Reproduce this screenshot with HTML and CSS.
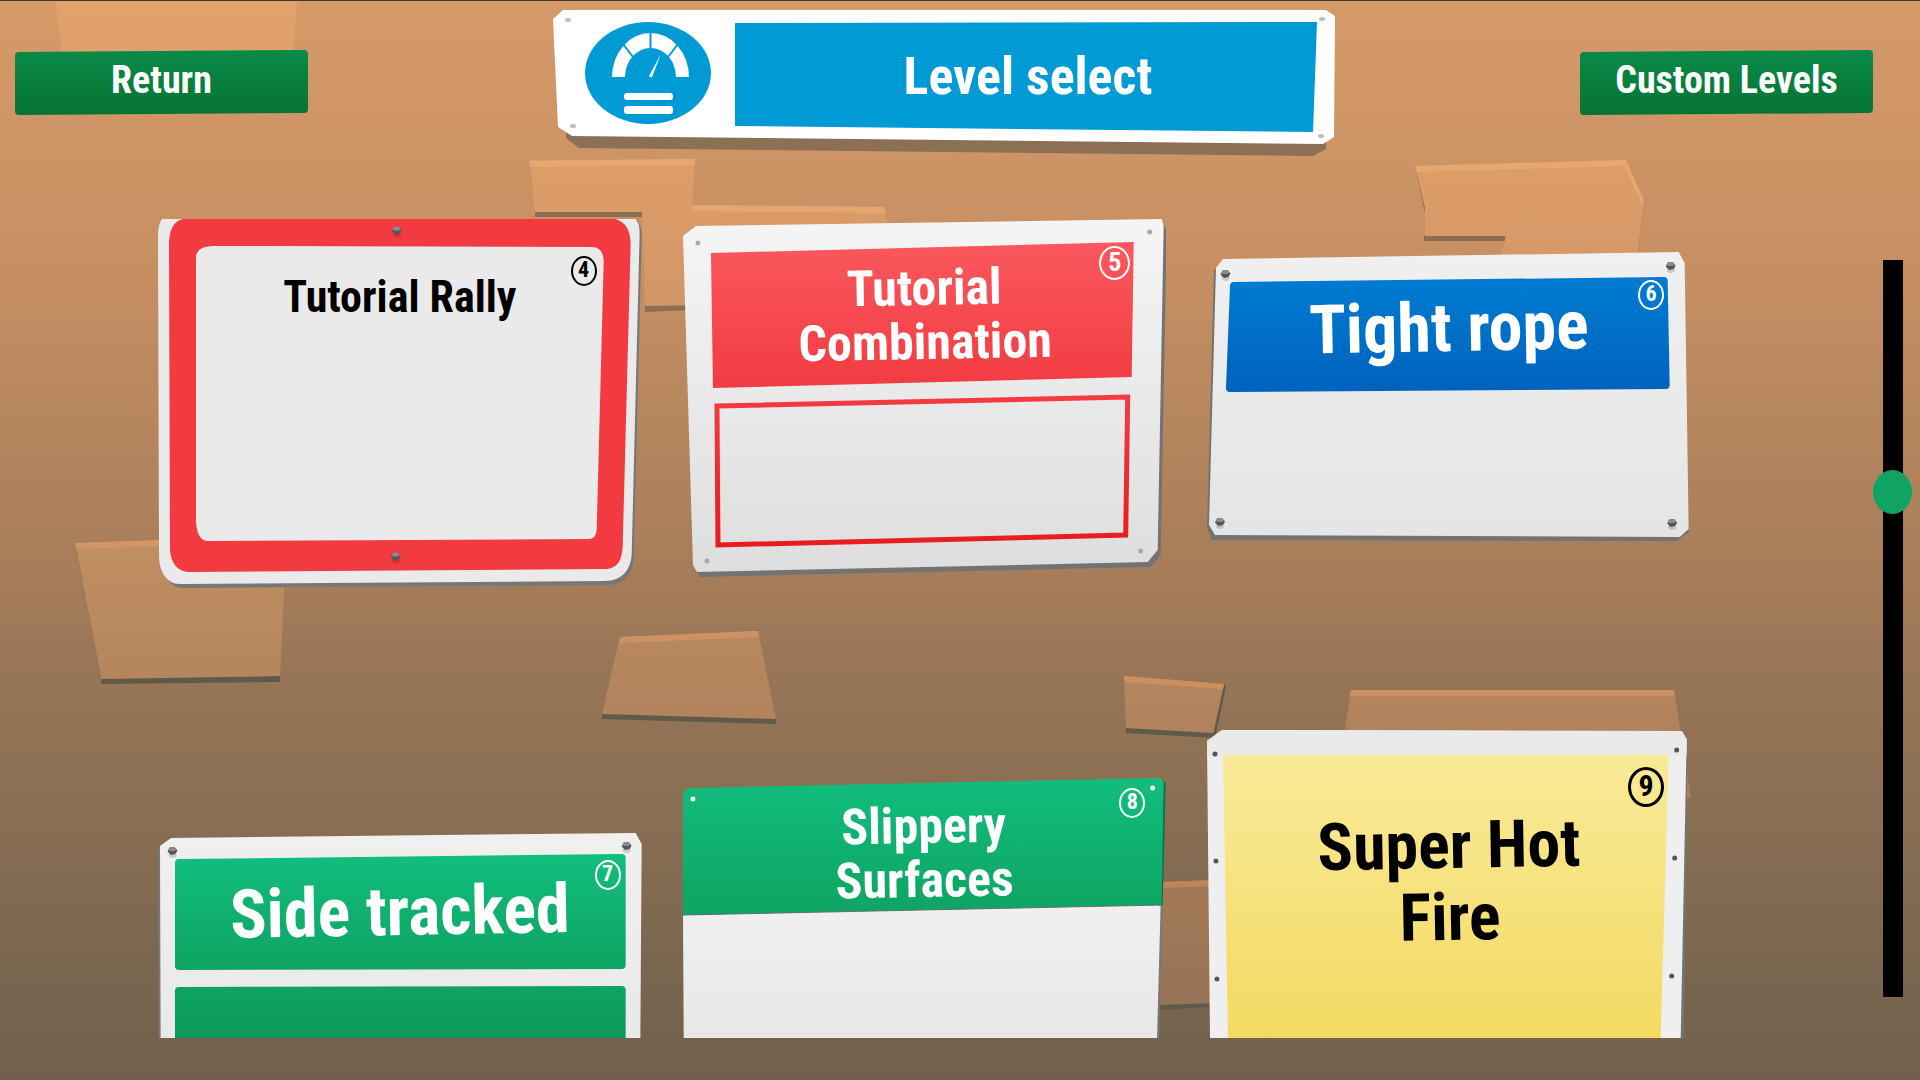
FILE: index.html
```html
<!DOCTYPE html>
<html lang="en">
<head>
<meta charset="utf-8">
<meta name="viewport" content="width=device-width, initial-scale=1">
<title>Level select</title>
<link rel="stylesheet" href="styles.css">
</head>
<body>
<svg class="backdrop" viewBox="0 0 1920 1080" preserveAspectRatio="none" aria-hidden="true">
  <defs>
    <linearGradient id="rock" gradientUnits="userSpaceOnUse" x1="0" y1="0" x2="0" y2="1080">
      <stop offset="0" stop-color="#e2a26c"/>
      <stop offset=".16" stop-color="#dc9d69"/>
      <stop offset=".23" stop-color="#d79968"/>
      <stop offset=".51" stop-color="#bf8e61"/>
      <stop offset=".63" stop-color="#b5855d"/>
      <stop offset=".68" stop-color="#b0825d"/>
      <stop offset=".83" stop-color="#a17958"/>
      <stop offset=".93" stop-color="#967357"/>
    </linearGradient>
    <linearGradient id="rock-edge" gradientUnits="userSpaceOnUse" x1="0" y1="0" x2="0" y2="1080">
      <stop offset="0" stop-color="#eaac76"/>
      <stop offset=".2" stop-color="#e5a670"/>
      <stop offset=".5" stop-color="#d49665"/>
      <stop offset=".63" stop-color="#cb8f62"/>
      <stop offset=".83" stop-color="#bb865d"/>
    </linearGradient>
    <linearGradient id="plate" x2="0" y2="1"><stop stop-color="#f5f5f5"/><stop offset="1" stop-color="#dedede"/></linearGradient>
    <linearGradient id="plate-soft" x2="0" y2="1"><stop stop-color="#f0f0f0"/><stop offset="1" stop-color="#e5e5e5"/></linearGradient>
    <linearGradient id="red" x2="0" y2="1"><stop stop-color="#fa585e"/><stop offset="1" stop-color="#f23b42"/></linearGradient>
    <linearGradient id="red-deep" x2="0" y2="1"><stop stop-color="#f43b41"/><stop offset="1" stop-color="#e81c20"/></linearGradient>
    <linearGradient id="blue" x2="0" y2="1"><stop stop-color="#007bd1"/><stop offset="1" stop-color="#0063be"/></linearGradient>
    <linearGradient id="green" x2="0" y2="1"><stop stop-color="#11bd7d"/><stop offset="1" stop-color="#0fa463"/></linearGradient>
    <linearGradient id="green-deep" x2="0" y2="1"><stop stop-color="#0fa261"/><stop offset="1" stop-color="#0b8b4d"/></linearGradient>
    <linearGradient id="button-green" x2="0" y2="1"><stop stop-color="#0a8a49"/><stop offset="1" stop-color="#067333"/></linearGradient>
    <linearGradient id="yellow" x2="0" y2="1"><stop stop-color="#f9ea98"/><stop offset="1" stop-color="#f4da62"/></linearGradient>
    <symbol id="bolt" viewBox="0 0 10 12">
      <ellipse cx="5" cy="9" rx="4" ry="3" fill="#000" opacity=".15"/>
      <path d="M2 1.500L7 1L10 4.500L8 8L3.500 9L0 5.500Z" fill="#555"/>
      <path d="M2 1.500L7 1L9 3.500L7 5L2 5L.8 4Z" fill="#8b8b8b"/>
    </symbol>
  </defs>
  <g fill="#8c6f52">
    <path d="M535 211H642V217H535ZM645 306L690 304V310L645 312Z"/>
    <path d="M1424 235H1506L1505 241H1424ZM1415 166L1425 213V200Z"/>
    <path d="M1644 201L1638 254L1636 252Z"/>
  </g>
  <g fill="#605a4a">
    <path d="M101 678L280 676V682L101 684ZM75 544L101 680L103 678L78 544Z"/>
    <path d="M602 713L776 718V724L602 719Z"/>
    <path d="M1126 727L1214 732L1224 684L1226 686L1215 738L1126 733Z"/>
    <path d="M1160 1004L1212 1002V1007L1160 1010Z"/>
  </g>
  <g fill="url(#rock)">
    <path d="M55 0H297L293 60H63Z"/>
    <path d="M530 160L695 159L692 205L884 207L892 240V302L645 306L642 212H535Z"/>
    <path d="M1415 166L1626 160L1644 201L1637 260H1500L1506 236H1425V208Z"/>
    <path d="M75 543L160 540L285 570L280 676L101 679Z"/>
    <path d="M620 637L758 631L776 719L602 714Z"/>
    <path d="M1124 676L1224 684L1213 733L1126 728Z"/>
    <path d="M1351 690H1674L1691 798H1345V730Z"/>
    <path d="M1160 882L1215 880V1003L1160 1005Z"/>
  </g>
  <g fill="url(#rock-edge)">
    <path d="M529 161L695 159V165L531 167ZM692 205L884 207L886 213L692 211Z"/>
    <path d="M1415 166L1626 160L1644 201L1642 204L1624 166L1417 172Z"/>
    <path d="M75 543L165 540V546L76 549Z"/>
    <path d="M620 637L758 631L759 637L619 643Z"/>
    <path d="M1124 676L1224 684L1223 689L1125 682Z"/>
    <path d="M1351 690H1674L1675 696H1350Z"/>
    <path d="M1160 882L1215 880V886L1160 888Z"/>
  </g>
</svg>

<div class="screen">
  <header class="topbar">
    <button class="plaque" type="button">
      <svg class="art" viewBox="0 0 293 65" preserveAspectRatio="none" aria-hidden="true">
        <path d="M4 2L289 0Q293 0 293 4V59Q293 63 289 63L4 65Q0 65 0 61V6Q0 2 4 2Z" fill="url(#button-green)"/>
      </svg>
      <span class="plaque-label">Return</span>
    </button>

    <div class="heading">
      <svg class="art" viewBox="0 0 783 148" preserveAspectRatio="none" aria-hidden="true">
        <path d="M13 122L760 128L773 128V140L760 147L26 139L13 129Z" fill="#8b7055"/>
        <path d="M0 10L10 1H773L782 7L781 128L770 135L19 127L5 118Z" fill="#fff"/>
        <path d="M182 14L764 13L760 123L182 117Z" fill="#009ad4"/>
        <ellipse cx="95" cy="64" rx="63" ry="51" fill="#009ad4"/>
        <g fill="#bdbdbd"><ellipse cx="15" cy="11" rx="3" ry="2"/><ellipse cx="20" cy="117" rx="3" ry="2"/><ellipse cx="769" cy="10" rx="3" ry="2"/><ellipse cx="768" cy="127" rx="3" ry="2"/></g>
        <path d="M59 68A38.500 44 0 0 1 136 68H123A25.500 29 0 0 0 72 68Z" fill="#fff"/>
        <path d="M97.500 22V42M70 35L80 48M125 35L115 48" stroke="#009ad4" stroke-width="2"/>
        <path d="M96 67L108 45L99 68Q97 69 96 67Z" fill="#fff"/>
        <rect x="71" y="84" width="49" height="7" rx="3" fill="#fff"/>
        <rect x="71" y="97" width="49" height="8" rx="3" fill="#fff"/>
      </svg>
      <h1 class="heading-text">Level select</h1>
    </div>

    <button class="plaque" type="button">
      <svg class="art" viewBox="0 0 293 65" preserveAspectRatio="none" aria-hidden="true">
        <path d="M4 2L289 0Q293 0 293 4V59Q293 63 289 63L4 65Q0 65 0 61V6Q0 2 4 2Z" fill="url(#button-green)"/>
      </svg>
      <span class="plaque-label">Custom Levels</span>
    </button>
  </header>

  <main class="browser">
    <div class="levels">
      <button class="level level-rally" type="button">
        <svg class="art" viewBox="0 0 484 370" preserveAspectRatio="none" aria-hidden="true">
          <path d="M6 0L1 335C2 356 14 369 24 369L450 366C466 366 475 355 476 340L484 18Q484 6 479 0Z" fill="#777"/>
          <path d="M4 0Q0 6 0 16L1 336C1 352 8 365 22 365L447 362C465 362 473 350 474 336L482 14Q482 4 478 0Z" fill="#eaeaea"/>
          <path d="M25 0Q11 3 11 26L12 331C13 345 20 353 32 353L446 350C460 350 464 342 465 328L473 24Q472 3 457 0Z" fill="#f13b40"/>
          <path d="M38 39Q38 27 56 27L434 28Q446 28 446 43L439 310Q439 320 430 320L50 322Q39 322 38 302Z" fill="#eaeaea"/>
          <use href="#bolt" x="234" y="6" width="10" height="13"/>
          <use href="#bolt" x="233" y="332" width="10" height="13"/>
        </svg>
        <span class="level-name">Tutorial Rally</span>
        <span class="number">4</span>
      </button>

      <button class="level level-combination" type="button">
        <svg class="art" viewBox="0 0 484 358" preserveAspectRatio="none" aria-hidden="true">
          <path d="M2 20L480 4L484 11L478 336L468 348L17 358L12 350Z" fill="#737373"/>
          <path d="M0 17L13 7L479 0L481 7L475 331L465 343L14 353L10 346Z" fill="url(#plate)"/>
          <path d="M28 34L451 23L449 158L30 169Z" fill="url(#red)"/>
          <path d="M34 187L445 178L443 316L35 326Z" fill="none" stroke="url(#red-deep)" stroke-width="5"/>
          <g fill="#a9a9a9"><circle cx="15" cy="24" r="2.500"/><circle cx="467" cy="13" r="2.500"/><circle cx="458" cy="332" r="2.500"/><circle cx="24" cy="342" r="2.500"/></g>
        </svg>
        <span class="level-name">Tutorial<br>Combination</span>
        <span class="number">5</span>
      </button>

      <button class="level level-rope" type="button">
        <svg class="art" viewBox="0 0 484 289" preserveAspectRatio="none" aria-hidden="true">
          <path d="M7 17L0 276L5 288L470 289L482 280V272L20 20Z" fill="#737373"/>
          <path d="M9 16L16 7L472 0L478 11L482 277L473 285L8 283L2 273Z" fill="url(#plate-soft)"/>
          <path d="M27 34L457 29L459 133L23 136Z" fill="url(#blue)" stroke="url(#blue)" stroke-width="8" stroke-linejoin="round"/>
          <use href="#bolt" x="13" y="17" width="11" height="12"/><use href="#bolt" x="459" y="9" width="10" height="12"/>
          <use href="#bolt" x="8" y="265" width="10" height="12"/><use href="#bolt" x="460" y="266" width="11" height="12"/>
        </svg>
        <span class="level-name">Tight rope</span>
        <span class="number">6</span>
      </button>

      <button class="level level-tracked" type="button">
        <svg class="art" viewBox="0 0 484 310" preserveAspectRatio="none" aria-hidden="true">
          <path d="M0 15L4 12V310H1Z" fill="#777"/>
          <path d="M2 13L13 5L478 0L484 11L482 310H3Z" fill="url(#plate-soft)"/>
          <path d="M21 30L464 25V132L21 133Z" fill="url(#green)" stroke="url(#green)" stroke-width="8" stroke-linejoin="round"/>
          <path d="M21 158L464 157V280H21Z" fill="url(#green-deep)" stroke="url(#green-deep)" stroke-width="8" stroke-linejoin="round"/>
          <use href="#bolt" x="9" y="13" width="11" height="12"/><use href="#bolt" x="464" y="8" width="10" height="12"/>
        </svg>
        <span class="level-name">Side tracked</span>
        <span class="number">7</span>
      </button>

      <button class="level level-slippery" type="button">
        <svg class="art" viewBox="0 0 484 310" preserveAspectRatio="none" aria-hidden="true">
          <path d="M476 128H480L475 310H470Z" fill="#777"/>
          <path d="M0 138L478 127L473 310H1Z" fill="url(#plate-soft)"/>
          <path d="M478 1L483 6L480 128L476 129Z" fill="#0a7047"/>
          <path d="M0 15L6 11L478 1L481 4L479 128L0 138Z" fill="url(#green)"/>
          <path d="M0 138L479 128" stroke="#5f6f68" stroke-width="1"/>
          <g fill="#fff"><circle cx="10" cy="22" r="2.500"/><circle cx="470" cy="11" r="2.500"/></g>
        </svg>
        <span class="level-name">Slippery<br>Surfaces</span>
        <span class="number">8</span>
      </button>

      <button class="level level-fire" type="button">
        <svg class="art" viewBox="0 0 484 310" preserveAspectRatio="none" aria-hidden="true">
          <path d="M478 10L481 14L477 310H472Z" fill="#747474"/>
          <path d="M0 12L15 1L475 2L480 10L474 310H3Z" fill="#efefef"/>
          <path d="M0 12L15 1L475 2L480 10V27H0Z" fill="#eaeaea"/>
          <path d="M16 26H462L454 310H21Z" fill="url(#yellow)"/>
          <g fill="#555"><circle cx="8" cy="25" r="2.500"/><circle cx="470" cy="21" r="2.500"/><circle cx="9" cy="132" r="2.500"/><circle cx="468" cy="129" r="2.500"/><circle cx="10" cy="250" r="2.500"/><circle cx="465" cy="247" r="2.500"/></g>
        </svg>
        <span class="level-name">Super Hot<br>Fire</span>
        <span class="number">9</span>
      </button>
    </div>
    <input class="scroller" type="range" min="0" max="1000" value="303" aria-label="Scroll levels">
  </main>
</div>
</body>
</html>
```

FILE: styles.css
```css
* {
  box-sizing: border-box;
}

body {
  margin: 0;
  font-family: "Roboto Condensed", "Open Sans Condensed", Lato, sans-serif;
  font-weight: 700;
  background: linear-gradient(#d69a69 0%, #cd9465 14%, #c79063 24%, #b4855d 41%, #a37b5a 56%, #9a7757 60%, #8d7054 72%, #7c6850 87%, #71604e 100%);
}

button {
  position: relative;
  display: flex;
  flex-direction: column;
  align-items: center;
  justify-content: flex-start;
  margin: 0;
  border: 0;
  background: none;
  color: #fff;
  font: inherit;
  cursor: pointer;
}

.backdrop,
.art {
  position: absolute;
  inset: 0;
  width: 100%;
  height: 100%;
}

.screen {
  position: relative;
  display: flex;
  flex-direction: column;
  height: 100vh;
  padding-bottom: 42px;
  border-top: 1px solid #40393a;
}

.topbar {
  display: flex;
  flex: 0 0 218px;
  justify-content: space-between;
  align-items: flex-start;
  padding: 8px 47px 0 15px;
}

.plaque {
  width: 293px;
  min-height: 65px;
  margin-top: 41px;
  padding: 10px 0 0;
  font-size: 38px;
  line-height: 40px;
}

.plaque-label,
.level-name,
.heading-text {
  position: relative;
}

.heading {
  position: relative;
  width: 783px;
  min-height: 148px;
  padding: 40px 14px 0 182px;
}

.heading-text {
  margin: 0;
  color: #fff;
  font-size: 52px;
  line-height: 56px;
  text-align: center;
}

.browser {
  display: flex;
  flex: 1;
  min-height: 0;
  padding: 0 8px 0 158px;
}

.levels {
  display: grid;
  flex: 1;
  grid-template-columns: repeat(3, 1fr);
  align-items: start;
  align-content: start;
  gap: 140px 41px;
  margin-right: 182px;
  overflow: hidden;
}

.level {
  min-height: 310px;
  font-size: 68px;
  line-height: 72px;
  text-align: center;
}

.level-name {
  transform: rotate(-1deg);
}

.number {
  position: absolute;
  width: 26px;
  height: 30px;
  border: 2px solid;
  border-radius: 50%;
  font-size: 22px;
  line-height: 24px;
}

.level-rally {
  min-height: 370px;
  padding: 54px 0 0;
  color: #000;
  font-size: 44px;
  line-height: 48px;
}

.level-rally .level-name {
  transform: none;
}

.level-rally .number {
  top: 37px;
  right: 45px;
}

.level-combination {
  min-height: 358px;
  padding: 42px 0 0;
  font-size: 50px;
  line-height: 54px;
}

.level-combination .number {
  top: 27px;
  right: 36px;
  width: 31px;
  height: 34px;
  font-size: 26px;
  line-height: 28px;
}

.level-rope {
  min-height: 289px;
  margin-top: 33px;
  padding: 40px 0 0;
}

.level-rope .number {
  top: 28px;
  right: 27px;
}

.level-tracked {
  margin-top: 104px;
  padding: 43px 0 0;
}

.level-tracked .number {
  top: 27px;
  right: 21px;
}

.level-slippery {
  margin-top: 48px;
  padding: 22px 0 0;
  font-size: 50px;
  line-height: 54px;
}

.level-slippery .number {
  top: 11px;
  right: 21px;
}

.level-fire {
  padding: 81px 0 0;
  color: #000;
  font-size: 66px;
}

.level-fire .number {
  top: 38px;
  right: 27px;
  width: 36px;
  height: 40px;
  border-width: 3px;
  font-size: 30px;
  line-height: 32px;
}

.scroller {
  width: 39px;
  margin: 41px 0;
  writing-mode: vertical-lr;
  appearance: none;
  background: linear-gradient(#000, #000) center / 20px 100% no-repeat;
}

.scroller::-webkit-slider-thumb {
  width: 39px;
  height: 44px;
  border: 0;
  border-radius: 50%;
  appearance: none;
  background: #0fa463;
}
```
